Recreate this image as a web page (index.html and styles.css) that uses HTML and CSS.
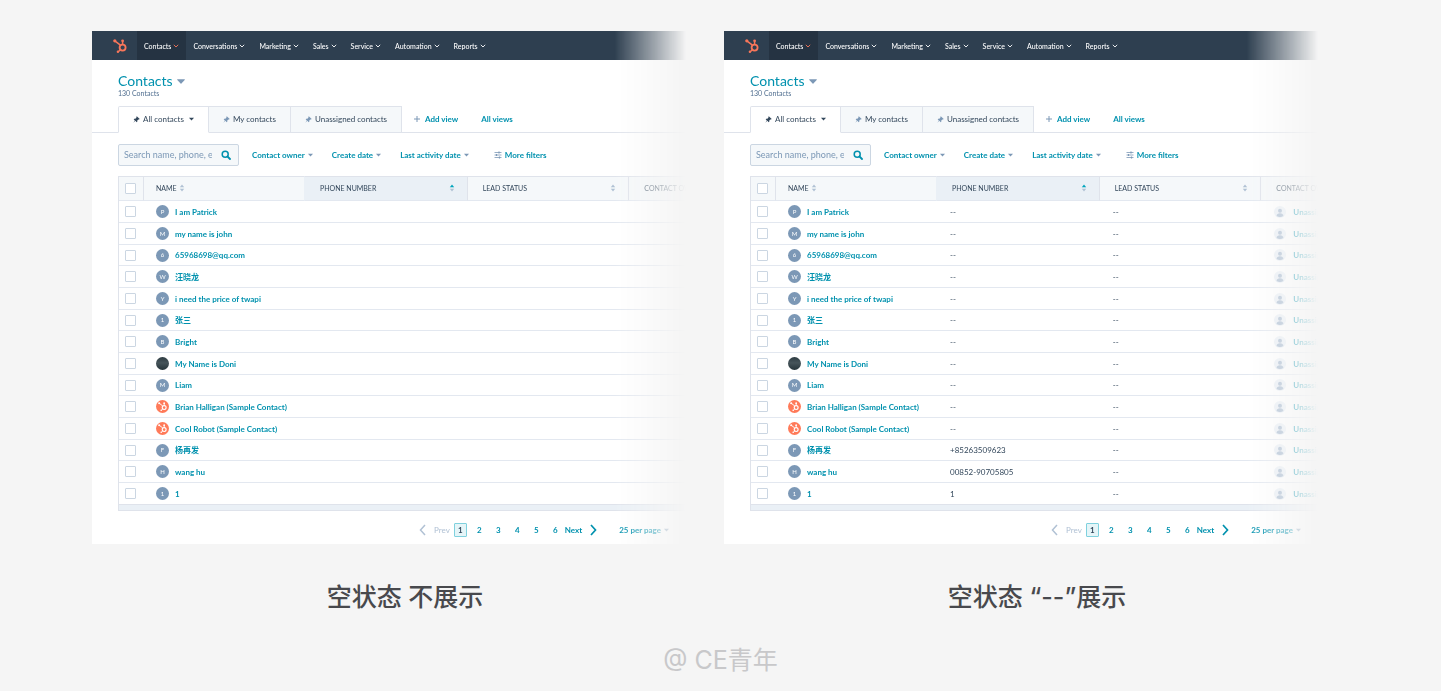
FILE: index.html
```html
<!DOCTYPE html>
<html lang="zh-CN">
<head>
<meta charset="utf-8">
<meta name="viewport" content="width=device-width, initial-scale=1">
<title>空状态</title>
<link rel="stylesheet" href="styles.css">
</head>
<body>
<svg class="sprite" aria-hidden="true">
  <symbol id="logo" viewBox="0 0 14 14">
    <g fill="none" stroke="currentColor" stroke-width="1.5">
      <circle cx="9.6" cy="8.6" r="3" stroke-width="1.8"/>
      <path d="M1.8 1.8 7.4 6.2M9.6 5.6V2M7.4 10.8 5 13"/>
    </g>
    <g fill="currentColor">
      <circle cx="1.8" cy="1.8" r="1.6"/><circle cx="9.6" cy="1.8" r="1.4"/><circle cx="4.9" cy="12.8" r="1.2"/>
    </g>
  </symbol>
  <symbol id="chevron" viewBox="0 0 6 4"><path d="M.8.8 3 3 5.2.8" fill="none" stroke="currentColor" stroke-width=".9"/></symbol>
  <symbol id="caret" viewBox="0 0 8 5"><path d="M.5.3h7a.4.4 0 0 1 .2.7L4.4 4.6a.5.5 0 0 1-.8 0L.3 1A.4.4 0 0 1 .5.3z" fill="currentColor"/></symbol>
  <symbol id="pin" viewBox="0 0 8 8"><path d="M4.3.3 7.7 3.5 6.8 4 6.2 3.9 4.9 5.2 4.9 6.5 4.2 7 2.7 5.5.4 7.6 2.1 5 .8 3.6 1.3 3 2.7 3.1 4 1.8 3.8 1z" fill="currentColor"/></symbol>
  <symbol id="plus" viewBox="0 0 8 8"><path d="M4 1v6M1 4h6" stroke="currentColor" stroke-width="1"/></symbol>
  <symbol id="search" viewBox="0 0 10 10"><circle cx="4.2" cy="4.2" r="3" fill="none" stroke="currentColor" stroke-width="1.5"/><path d="M6.5 6.5 9 9" stroke="currentColor" stroke-width="1.8" stroke-linecap="round"/></symbol>
  <symbol id="filters" viewBox="0 0 8 8"><path d="M.5 1.5h7M.5 4h7M.5 6.5h7" stroke="currentColor" stroke-width=".8"/><path d="M5 .5v2M2.500 3v2M5.500 5.500v2" stroke="currentColor" stroke-width="1.2"/></symbol>
  <symbol id="sort" viewBox="0 0 6 8"><path class="sort-up" d="M3 .6 5.200 3.200H.8z"/><path class="sort-down" d="M3 7.400.8 4.800h4.400z"/></symbol>
  <symbol id="prev" viewBox="0 0 7 12"><path d="M6 1 1.500 6 6 11" fill="none" stroke="currentColor" stroke-width="1.5"/></symbol>
  <symbol id="next" viewBox="0 0 7 12"><path d="M1 1 5.500 6 1 11" fill="none" stroke="currentColor" stroke-width="1.7"/></symbol>
  <symbol id="person" viewBox="0 0 12 12"><circle cx="6" cy="6" r="6" fill="#eaf0f6"/><circle cx="6" cy="4.800" r="2" fill="#a5b8cf"/><path d="M2.600 10c0-2 1.500-2.800 3.400-2.800S9.400 8 9.400 10c-1.800 1.300-5 1.300-6.800 0z" fill="#a5b8cf"/></symbol>
</svg>

<main class="page">
  <div class="compare" id="compare"></div>
  <p class="signature">@ CE青年</p>
</main>
<script src="app.js"></script>
</body>
</html>
```

FILE: styles.css
```css
* { box-sizing: border-box; }

body {
  margin: 0;
  background: #f5f5f5;
  color: #33475b;
  font-family: Lato, "Noto Sans CJK SC", sans-serif;
  font-size: 8px;
  line-height: 12px;
}

button, input { font: inherit; color: inherit; }
button { border: 0; padding: 0; background: none; cursor: pointer; }
a { color: inherit; text-decoration: none; }
h1, p, figure, ul { margin: 0; padding: 0; }
ul { list-style: none; }
svg { display: block; flex: none; }
.sprite { position: absolute; width: 0; height: 0; }

.page { padding: 31px 123px 8px 92px; }
.compare {
  display: grid;
  grid-template-columns: repeat(2, minmax(0, 1fr));
  column-gap: 38px;
}

/* Screen panel, fading out on its right side */
.screen {
  background: #fff;
  overflow: hidden;
  white-space: nowrap;
  -webkit-mask-image: linear-gradient(to right, #000 88%, transparent 100%);
  mask-image: linear-gradient(to right, #000 88%, transparent 100%);
}

.nav {
  display: flex;
  height: 29px;
  padding-left: 21px;
  background: #2e3f50;
  color: #fff;
  font-size: 7px;
  font-weight: 500;
}
.nav-logo { display: flex; align-items: center; width: 24px; color: #f8765a; }
.nav-logo svg { width: 14px; height: 14px; }
.nav-list { display: flex; }
.nav-link { display: flex; align-items: center; gap: 2px; height: 29px; padding: 0 7px; }
.nav-link svg { width: 6px; height: 4px; margin-top: 1px; }
.nav-link.is-active { background: #253342; }
.nav-link.is-active svg { color: #f8765a; }

.heading { padding: 13px 26px 8px; }
.title { font-size: 14px; line-height: 16px; font-weight: 400; color: #0091ae; }
.title button { display: flex; align-items: center; gap: 4px; }
.title svg { width: 8px; height: 5px; color: #7c98b6; }
.count { font-size: 7px; line-height: 9px; color: #516f90; }

.views {
  display: flex;
  height: 27px;
  padding-left: 26px;
  box-shadow: inset 0 -1px #dfe3eb;
}
.tab {
  display: flex;
  align-items: center;
  justify-content: center;
  gap: 3px;
  padding: 0 14px 1px;
  border: 1px solid #dfe3eb;
  border-left-width: 0;
  background: #f5f8fa;
}
.tab:first-child {
  border-left-width: 1px;
  border-bottom-color: #fff;
  border-radius: 2px 0 0 0;
  background: #fff;
}
.tab svg { width: 7px; height: 7px; color: #7c98b6; }
.tab:first-child svg { color: #33475b; }
.tab .caret { width: 5px; height: 4px; margin-left: 2px; }
.view-link {
  display: flex;
  align-items: center;
  gap: 4px;
  margin-left: 11px;
  padding-bottom: 1px;
  font-weight: 700;
  color: #0091ae;
}
.view-link + .view-link { margin-left: 23px; }
.view-link svg { width: 8px; height: 8px; color: #7c98b6; }

.toolbar { display: flex; align-items: center; padding: 11px 26px 10px; }
.search {
  display: flex;
  align-items: center;
  width: 121px;
  height: 22px;
  margin-right: 13px;
  padding: 0 7px 0 5px;
  border: 1px solid #cbd6e2;
  border-radius: 2px;
  background: #f5f8fa;
}
.search input {
  width: 88px;
  margin-right: 9px;
  padding: 0;
  border: 0;
  outline: 0;
  background: none;
  font-size: 9px;
}
.search input::placeholder { color: #7c98b6; opacity: 1; }
.search svg { width: 10px; height: 10px; color: #0091ae; }
.filter {
  display: flex;
  align-items: center;
  gap: 3px;
  margin-right: 19px;
  padding-bottom: 1px;
  font-weight: 700;
  color: #0091ae;
}
.filter svg { width: 5px; height: 4px; color: #7c98b6; }
.filter.more { margin-left: 6px; }
.filter.more svg { width: 8px; height: 8px; }

.table-wrap {
  margin-left: 26px;
  padding-bottom: 5px;
  border-bottom: 1px solid #dfe3eb;
  border-left: 1px solid #dfe3eb;
  background: #eaf0f6;
}
.contacts {
  width: 100%;
  table-layout: fixed;
  border-collapse: separate;
  border-spacing: 0;
  background: #fff;
}
.contacts th, .contacts td {
  padding: 0 0 0 14px;
  border-bottom: 1px solid #e3e8f0;
  text-align: left;
  overflow: hidden;
}
.contacts th {
  height: 25px;
  padding: 0 12px 1px 15px;
  border-top: 1px solid #dfe3eb;
  background: #f5f8fa;
  font-size: 7px;
  font-weight: 400;
}
.contacts th + th { border-left: 1px solid #dfe3eb; }
.contacts th.sorted { background: #eaf0f6; border-left-color: #eaf0f6; }
.contacts th:first-child, .contacts td:first-child { padding: 0 0 0 6px; }
.contacts th:nth-child(2) { padding-left: 12px; }
.contacts td:nth-child(2) { padding-left: 13px; }
.contacts td { height: 22px; }
.contacts tr:nth-child(3n) td { height: 21px; }
.contacts tr:last-child td { border-bottom-color: #dfe3eb; }
.col-check { width: 24px; }
.col-name { width: 28.4%; }
.col-phone { width: 28.7%; }
.col-status { width: 28.5%; }
.head { display: flex; align-items: center; justify-content: space-between; }
.head.tight { justify-content: flex-start; gap: 2px; }
.head svg { width: 6px; height: 8px; fill: #b0c1d4; }
.sorted .sort-svg { --up: #00a4bd; }
.sort-up { fill: var(--up, #b0c1d4); }

.check {
  appearance: none;
  display: block;
  width: 11px;
  height: 11px;
  margin: 0;
  border: 1px solid #cbd6e2;
  border-radius: 1px;
  background: #fff;
}
.person { display: flex; align-items: center; gap: 6px; font-weight: 700; color: #0091ae; }
.avatar {
  display: flex;
  align-items: center;
  justify-content: center;
  flex: none;
  width: 13px;
  height: 13px;
  border-radius: 50%;
  background: #7c98b6;
  color: #fff;
  font-size: 6px;
  font-weight: 400;
}
.avatar.photo { background: linear-gradient(#2d3b42, #46545a 45%, #26343a); }
.avatar.brand { background: #ff7a59; }
.avatar svg { width: 9px; height: 9px; }
.owner { display: flex; align-items: center; gap: 7px; font-weight: 700; color: #0091ae; }
.owner svg { width: 12px; height: 12px; }

.pager {
  display: flex;
  align-items: center;
  justify-content: flex-end;
  height: 33px;
  padding: 4px 17px 0 0;
  font-weight: 700;
  color: #0091ae;
}
.step { display: flex; align-items: center; gap: 8px; }
.step svg { width: 7px; height: 12px; }
.step:disabled { margin-right: 4px; color: #b0c1d4; font-weight: 400; }
.pages { display: flex; gap: 6px; margin-right: 3px; }
.pages a {
  display: block;
  width: 13px;
  border: 1px solid transparent;
  border-radius: 1px;
  text-align: center;
}
.pages a[aria-current] { border-color: #7fd1de; background: #e5f5f8; color: #33475b; }
.per-page { display: flex; align-items: center; gap: 3px; margin-left: 22px; font-weight: 700; }
.per-page svg { width: 5px; height: 4px; color: #7c98b6; }

.caption {
  padding: 35px 0 0 32px;
  color: #48494d;
  font-family: Inter, "Noto Sans CJK SC", sans-serif;
  font-size: 25px;
  line-height: 36px;
  font-weight: 500;
  text-align: center;
}
.signature {
  padding: 27px 0 0 31px;
  color: #c8c8ca;
  font-family: Inter, "Noto Sans CJK SC", sans-serif;
  font-size: 25px;
  line-height: 36px;
  text-align: center;
}
```

FILE: app.js
```js
const icon = (id, cls = "") =>
  `<svg class="${cls}" aria-hidden="true"><use href="#${id}"></use></svg>`;

const contacts = [
  ["P", "I am Patrick"],
  ["M", "my name is john"],
  ["6", "65968698@qq.com"],
  ["W", "汪晓龙"],
  ["Y", "i need the price of twapi"],
  ["1", "张三"],
  ["B", "Bright"],
  ["photo", "My Name is Doni"],
  ["M", "Liam"],
  ["brand", "Brian Halligan (Sample Contact)"],
  ["brand", "Cool Robot (Sample Contact)"],
  ["F", "杨再发", "+85263509623"],
  ["H", "wang hu", "00852-90705805"],
  ["1", "1", "1"],
];

const avatar = (kind) => {
  if (kind === "photo") return `<span class="avatar photo"></span>`;
  if (kind === "brand") return `<span class="avatar brand">${icon("logo")}</span>`;
  return `<span class="avatar">${kind}</span>`;
};

const row = ([kind, name, phone], filled) => `
  <tr>
    <td><input class="check" type="checkbox" aria-label="${name}"></td>
    <td><a class="person" href="#">${avatar(kind)}${name}</a></td>
    <td>${filled ? phone || "--" : ""}</td>
    <td>${filled ? "--" : ""}</td>
    <td>${filled ? `<a class="owner" href="#">${icon("person")}Unassigned</a>` : ""}</td>
  </tr>`;

const navItems = ["Contacts", "Conversations", "Marketing", "Sales", "Service", "Automation", "Reports"];

const screen = ({ caption, filled }) => `
  <figure>
    <div class="screen">
      <nav class="nav">
        <a class="nav-logo" href="#" aria-label="Home">${icon("logo")}</a>
        <ul class="nav-list">${navItems.map((t, i) =>
          `<li><a class="nav-link${i ? "" : " is-active"}" href="#">${t}${icon("chevron")}</a></li>`).join("")}</ul>
      </nav>
      <header class="heading">
        <h1 class="title"><button type="button">Contacts${icon("caret")}</button></h1>
        <p class="count">130 Contacts</p>
      </header>
      <div class="views">
        <button class="tab" type="button">${icon("pin")}All contacts${icon("caret", "caret")}</button>
        <button class="tab" type="button">${icon("pin")}My contacts</button>
        <button class="tab" type="button">${icon("pin")}Unassigned contacts</button>
        <button class="view-link" type="button">${icon("plus")}Add view</button>
        <a class="view-link" href="#">All views</a>
      </div>
      <div class="toolbar">
        <label class="search"><input type="text" aria-label="Search" placeholder="Search name, phone, email">${icon("search")}</label>
        ${["Contact owner", "Create date", "Last activity date"].map((t) =>
          `<button class="filter" type="button">${t}${icon("caret")}</button>`).join("")}
        <button class="filter more" type="button">${icon("filters")}More filters</button>
      </div>
      <div class="table-wrap">
        <table class="contacts">
          <colgroup><col class="col-check"><col class="col-name"><col class="col-phone"><col class="col-status"><col></colgroup>
          <thead>
            <tr>
              <th><input class="check" type="checkbox" aria-label="Select all"></th>
              <th><div class="head tight">NAME${icon("sort")}</div></th>
              <th class="sorted"><div class="head">PHONE NUMBER${icon("sort", "sort-svg")}</div></th>
              <th><div class="head">LEAD STATUS${icon("sort")}</div></th>
              <th>CONTACT OWNER</th>
            </tr>
          </thead>
          <tbody>${contacts.map((c) => row(c, filled)).join("")}</tbody>
        </table>
      </div>
      <div class="pager">
        <button class="step" type="button" disabled>${icon("prev")}Prev</button>
        <div class="pages">${[1, 2, 3, 4, 5, 6].map((n) =>
          `<a href="#"${n === 1 ? ' aria-current="page"' : ""}>${n}</a>`).join("")}</div>
        <button class="step" type="button">Next${icon("next")}</button>
        <button class="per-page" type="button">25 per page${icon("caret")}</button>
      </div>
    </div>
    <figcaption class="caption">${caption}</figcaption>
  </figure>`;

document.getElementById("compare").innerHTML = [
  { caption: "空状态 不展示", filled: false },
  { caption: "空状态 “--”展示", filled: true },
].map(screen).join("");
```
